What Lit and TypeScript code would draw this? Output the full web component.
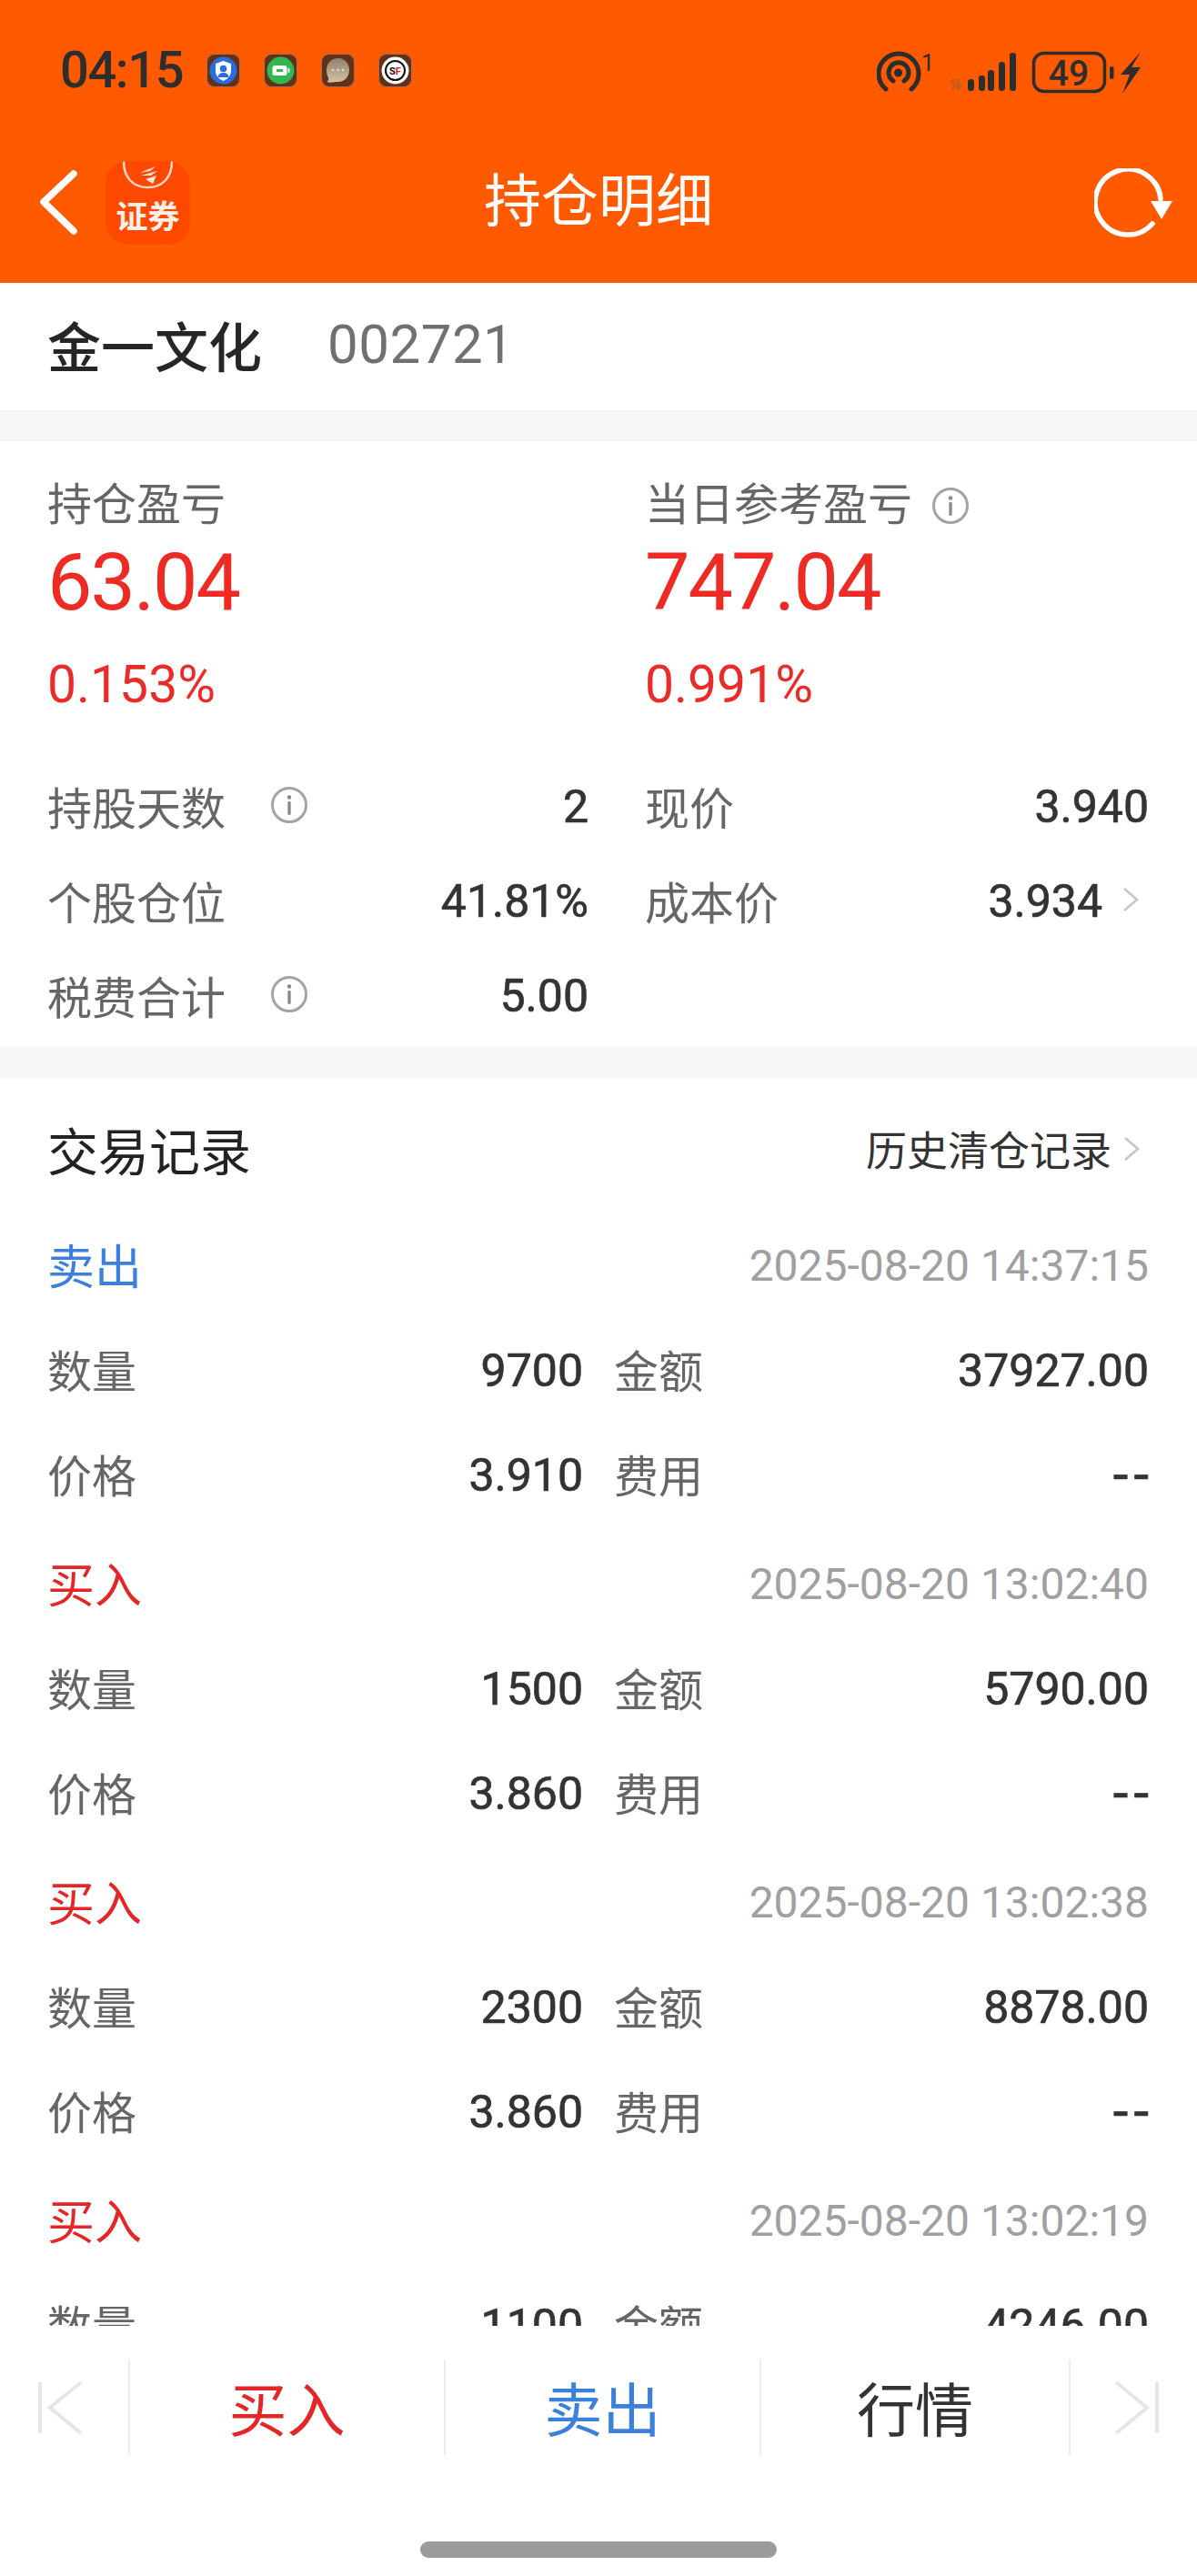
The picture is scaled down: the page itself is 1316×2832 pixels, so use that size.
import {html, css, svg, LitElement} from 'lit';
import {customElement} from 'lit/decorators.js';

// the last record is cut by the footer, so its price row is never seen
const trades = [
  {side: '卖出', sell: true, time: '2025-08-20 14:37:15', qty: '9700', amount: '37927.00', price: '3.910'},
  {side: '买入', sell: false, time: '2025-08-20 13:02:40', qty: '1500', amount: '5790.00', price: '3.860'},
  {side: '买入', sell: false, time: '2025-08-20 13:02:38', qty: '2300', amount: '8878.00', price: '3.860'},
  {side: '买入', sell: false, time: '2025-08-20 13:02:19', qty: '1100', amount: '4246.00', price: ''},
];

const info = html`<svg class="info" viewBox="0 0 42 42">
  <circle cx="21" cy="21" r="18.5" fill="none" stroke="#a3a3a3" stroke-width="3"></circle>
  <circle cx="21" cy="12.5" r="2.3" fill="#8a8a8a"></circle>
  <rect x="19.3" y="17" width="3.4" height="15" rx="1.4" fill="#8a8a8a"></rect>
</svg>`;

const chevron = html`<svg class="chev" viewBox="0 0 18 28">
  <path d="M2 2 L16 14 L2 26" fill="none" stroke="#c6c6c6" stroke-width="2.6"></path>
</svg>`;

const statusApps = [
  svg`<circle cx="18.5" cy="18.5" r="15" fill="#2a6de0"></circle>
    <path d="M18.5 8 L27 11 V19 C27 25 22 28.500 18.500 30 C15 28.500 10 25 10 19 V11 Z" fill="#fff"></path>
    <circle cx="18.500" cy="16.500" r="3.800" fill="#2a6de0"></circle>
    <path d="M12.500 26 C13 22 15.500 21 18.500 21 C21.500 21 24 22 24.500 26 Z" fill="#2a6de0"></path>`,
  svg`<circle cx="18.500" cy="18.500" r="15" fill="#2fb84f"></circle>
    <rect x="9.500" y="13" width="16" height="11" rx="2.500" fill="#fff"></rect>
    <rect x="26.500" y="16" width="2" height="5" rx="1" fill="#fff"></rect>
    <rect x="14" y="17" width="7" height="3" fill="#2fb84f"></rect>`,
  svg`<defs><linearGradient id="bub" x1="0" y1="0" x2="0" y2="1">
      <stop offset="0" stop-color="#8e8170"></stop><stop offset="1" stop-color="#d3c3a2"></stop>
    </linearGradient></defs>
    <path d="M18.500 5 C26.500 5 31 11 31 18 C31 25 26 31 18.500 31 C15 31 10 32.500 6.500 31 C8.500 29.500 8.500 27.500 8 26.500 C6.500 24 6 21 6 18 C6 11 11 5 18.500 5 Z" fill="url(#bub)"></path>
    <circle cx="13" cy="18" r="1.300" fill="#ddd"></circle>
    <circle cx="18.500" cy="18" r="1.300" fill="#ddd"></circle>
    <circle cx="24" cy="18" r="1.300" fill="#ddd"></circle>`,
  svg`<circle cx="18.500" cy="18.500" r="15" fill="#fff"></circle>
    <circle cx="18.500" cy="18.500" r="10.500" fill="none" stroke="#111" stroke-width="2"></circle>
    <text x="18.500" y="22.500" text-anchor="middle" font-family="Roboto, sans-serif" font-weight="700" font-size="11" fill="#111">S<tspan fill="#d22">F</tspan></text>`,
];

@customElement('app-root')
export class AppRoot extends LitElement {
  static styles = css`
    :host {
      display: flex;
      flex-direction: column;
      width: 1316px;
      height: 2832px;
      overflow: hidden;
      background: #fff;
      font-family: Roboto, "Noto Sans CJK SC", sans-serif;
      color: #666;
    }
    svg { display: block; flex: none; }

    .head { height: 311px; flex: none; background: #ff5a00; display: flex; flex-direction: column; }
    .status { display: flex; align-items: flex-start; height: 177px; box-sizing: border-box; padding: 55px 62px 0 66px; color: #2d2d2d; }
    .clock { width: 134px; height: 45px; font-size: 56px; font-weight: 500; line-height: 45px; letter-spacing: -1.4px; white-space: nowrap; }
    .apps { display: flex; gap: 26px; margin: 4px 0 0 27px; }
    .app { width: 37px; height: 37px; border-radius: 9px; background: #63301a; box-shadow: 0 0 0 1px rgba(255, 190, 140, .45) inset; }
    .sys { margin-left: auto; }
    .bar { display: grid; grid-template-columns: 1fr auto 1fr; height: 92px; }
    .bar-left { display: flex; align-items: flex-start; gap: 30px; padding-left: 42px; }
    .back { width: 44px; height: 72px; margin-top: 9px; }
    .logo { width: 93px; height: 92px; border-radius: 25px; background: #ff4800; }
    .title { font-size: 63px; line-height: 90px; color: #fff; }
    .bar-right { display: flex; justify-content: flex-end; padding: 8px 27px 0 0; }
    .refresh { width: 86px; height: 78px; }

    .stock { height: 140px; flex: none; box-sizing: border-box; padding: 0 0 6px 52px; display: flex; align-items: center; gap: 72px; }
    .stock b { font-size: 59px; font-weight: 500; color: #262626; }
    .stock span { font-size: 60px; letter-spacing: .5px; color: #707070; }
    .gap { height: 34px; flex: none; background: #f5f7f9; }
    .gap.wide { height: 36px; }

    .summary { height: 665px; flex: none; box-sizing: border-box; padding: 41px 53px 0 52px; display: grid; grid-template-columns: 595px 554px; column-gap: 62px; grid-template-rows: 60px 108px 118px 21px 104px 104px 104px; }
    .lab { font-size: 49px; line-height: 60px; display: flex; align-items: center; white-space: nowrap; }
    .lab .info { margin-left: 21px; }
    .big { font-size: 88px; line-height: 108px; letter-spacing: -2px; color: #ee2a24; }
    .pct { font-size: 57px; line-height: 118px; color: #e92c27; }
    .spacer { grid-column: 1 / 3; }
    .stat { display: flex; align-items: center; font-size: 49px; }
    .stat .info { margin-left: 49px; }
    .stat .val { margin-left: auto; padding-top: 4px; font-size: 50px; color: #333; -webkit-text-stroke: .7px #333; }
    .stat .chev { margin-left: 22px; margin-right: 11px; }
    .info { width: 42px; height: 42px; }
    .chev { width: 18px; height: 28px; }

    .trades { flex: 1; min-height: 0; overflow: hidden; padding: 0 53px 0 52px; }
    .sec { height: 146px; display: flex; align-items: center; box-sizing: border-box; padding-top: 7px; }
    .sec h2 { margin: 0; font-size: 56px; font-weight: 400; color: #222; }
    .sec .more { margin-left: auto; font-size: 45px; color: #333; }
    .sec .chev { margin-left: 13px; margin-right: 10px; }
    .trade { height: 350px; }
    .t-head { height: 115px; display: flex; justify-content: space-between; align-items: center; }
    .side { font-size: 52px; color: #e32626; }
    .side.sell { color: #3a80dc; }
    .when { font-size: 48px; padding-top: 4px; color: #a0a0a0; }
    .t-row { height: 115px; display: grid; grid-template-columns: 589px 1fr; align-items: center; font-size: 49px; }
    .cell { display: flex; justify-content: space-between; align-items: center; }
    .cell + .cell { padding-left: 34px; }
    .num { font-size: 50px; padding-top: 4px; color: #333; -webkit-text-stroke: .7px #333; }
    .num.dash { font-size: 60px; letter-spacing: 6px; margin-right: -6px; }

    .foot { height: 275px; flex: none; display: flex; flex-direction: column; align-items: center; background: #fff; }
    .tabs { display: grid; grid-template-columns: 141px 347px 347px 340px 141px; width: 1316px; height: 105px; margin-top: 37px; }
    .tab { display: flex; align-items: center; justify-content: center; font-size: 64px; padding-bottom: 4px; border-left: 2px solid #ececec; box-sizing: border-box; color: #333; }
    .tab:first-child { border-left: none; justify-content: flex-start; padding: 0 0 0 40px; }
    .tab:last-child { justify-content: flex-start; padding: 0 0 0 49px; }
    .tab.buy { color: #e32626; }
    .tab.sell { color: #3a80dc; }
    .skip { width: 50px; height: 58px; }
    .pill { width: 392px; height: 18px; border-radius: 9px; background: #9b9b9b; margin-top: 95px; }
  `;

  renderStatus() {
    return html`<div class="status">
      <div class="clock">04:15</div>
      <div class="apps">
        ${statusApps.map((a) => html`<svg class="app" viewBox="0 0 37 37">${a}</svg>`)}
      </div>
      <svg class="sys" width="290" height="50" viewBox="965 55 290 50">
        <g fill="none" stroke="#2d2d2d" stroke-width="5" stroke-linecap="round">
          <path d="M975 98 A22 22 0 1 1 1003 98"></path>
          <path d="M983 89 A11 11 0 1 1 995 89"></path>
        </g>
        <circle cx="988.500" cy="80" r="4.500" fill="#2d2d2d"></circle>
        <text x="1021" y="78" text-anchor="middle" font-size="25" fill="#2d2d2d" font-family="Roboto, sans-serif">1</text>
        <path d="M1049 86 L1053 92 H1050.500 V100 H1047.500 V92 H1045 Z M1054 100 L1050.500 94 H1053 V86 H1056 V94 H1060 Z" fill="#cc5a1c"></path>
        ${[[1065, 87], [1077, 83], [1087, 77], [1099, 68], [1111, 58]].map(([x, y]) =>
          svg`<rect x=${x} y=${y} width="7" height=${100 - y} rx="3.300" fill="#2d2d2d"></rect>`)}
        <rect x="1137.500" y="58.500" width="78" height="42" rx="11" fill="none" stroke="#2d2d2d" stroke-width="3.500"></rect>
        <text x="1176" y="94" text-anchor="middle" font-size="39" font-weight="500" fill="#2d2d2d" font-family="Roboto, sans-serif">49</text>
        <rect x="1221" y="73" width="4.500" height="14" rx="2" fill="#2d2d2d"></rect>
        <path d="M1255 57 L1233 82 H1243 L1235 103 L1255 74 H1245 Z" fill="#2d2d2d"></path>
      </svg>
    </div>`;
  }

  renderBar() {
    return html`<div class="bar">
      <div class="bar-left">
        <svg class="back" viewBox="0 0 44 72">
          <path d="M39 5 L6 36 L39 68" fill="none" stroke="#fff" stroke-width="7.500" stroke-linecap="round" stroke-linejoin="round"></path>
        </svg>
        <svg class="logo" viewBox="0 0 93 92">
          <path d="M20 0 C20 18 30 29 46.500 29 C63 29 73 18 73 0" fill="none" stroke="#ffd8c4" stroke-width="2.500"></path>
          <path d="M37 13 L55 6 L49 11 Z M39 16 L57 11 L50 16 Z M44 20 L56 16 L52 25 Z" fill="#ffe6d8"></path>
          <text x="46.500" y="74" text-anchor="middle" font-size="35" font-weight="700" fill="#fff0e6" font-family="'Noto Sans CJK SC', sans-serif">证券</text>
        </svg>
      </div>
      <div class="title">持仓明细</div>
      <div class="bar-right">
        <svg class="refresh" viewBox="0 0 86 78">
          <path d="M64 61 A36 36 0 1 1 73 34" fill="none" stroke="#fff" stroke-width="5.500" stroke-linecap="round"></path>
          <path d="M62 36 H86 L74 56 Z" fill="#fff"></path>
        </svg>
      </div>
    </div>`;
  }

  renderSummary() {
    return html`<section class="summary">
      <div class="lab">持仓盈亏</div>
      <div class="lab">当日参考盈亏${info}</div>
      <div class="big">63.04</div>
      <div class="big">747.04</div>
      <div class="pct">0.153%</div>
      <div class="pct">0.991%</div>
      <div class="spacer"></div>
      <div class="stat">持股天数${info}<span class="val">2</span></div>
      <div class="stat">现价<span class="val">3.940</span></div>
      <div class="stat">个股仓位<span class="val">41.81%</span></div>
      <div class="stat">成本价<span class="val">3.934</span>${chevron}</div>
      <div class="stat">税费合计${info}<span class="val">5.00</span></div>
    </section>`;
  }

  renderTrade(t: (typeof trades)[number]) {
    return html`<div class="trade">
      <div class="t-head">
        <span class="side ${t.sell ? 'sell' : ''}">${t.side}</span>
        <span class="when">${t.time}</span>
      </div>
      <div class="t-row">
        <div class="cell"><span>数量</span><span class="num">${t.qty}</span></div>
        <div class="cell"><span>金额</span><span class="num">${t.amount}</span></div>
      </div>
      ${t.price ? html`<div class="t-row">
        <div class="cell"><span>价格</span><span class="num">${t.price}</span></div>
        <div class="cell"><span>费用</span><span class="num dash">--</span></div>
      </div>` : ''}
    </div>`;
  }

  render() {
    return html`
      <header class="head">${this.renderStatus()}${this.renderBar()}</header>
      <div class="stock"><b>金一文化</b><span>002721</span></div>
      <div class="gap"></div>
      ${this.renderSummary()}
      <div class="gap wide"></div>
      <section class="trades">
        <div class="sec"><h2>交易记录</h2><span class="more">历史清仓记录</span>${chevron}</div>
        ${trades.map((t) => this.renderTrade(t))}
      </section>
      <footer class="foot">
        <div class="tabs">
          <div class="tab">
            <svg class="skip" viewBox="0 0 50 58"><path d="M4 1 V57 M49 1 L15 29 L49 57" fill="none" stroke="#e6e6e6" stroke-width="4"></path></svg>
          </div>
          <div class="tab buy">买入</div>
          <div class="tab sell">卖出</div>
          <div class="tab">行情</div>
          <div class="tab">
            <svg class="skip" viewBox="0 0 50 58"><path d="M46 1 V57 M1 1 L35 29 L1 57" fill="none" stroke="#e6e6e6" stroke-width="4"></path></svg>
          </div>
        </div>
        <div class="pill"></div>
      </footer>
    `;
  }
}
